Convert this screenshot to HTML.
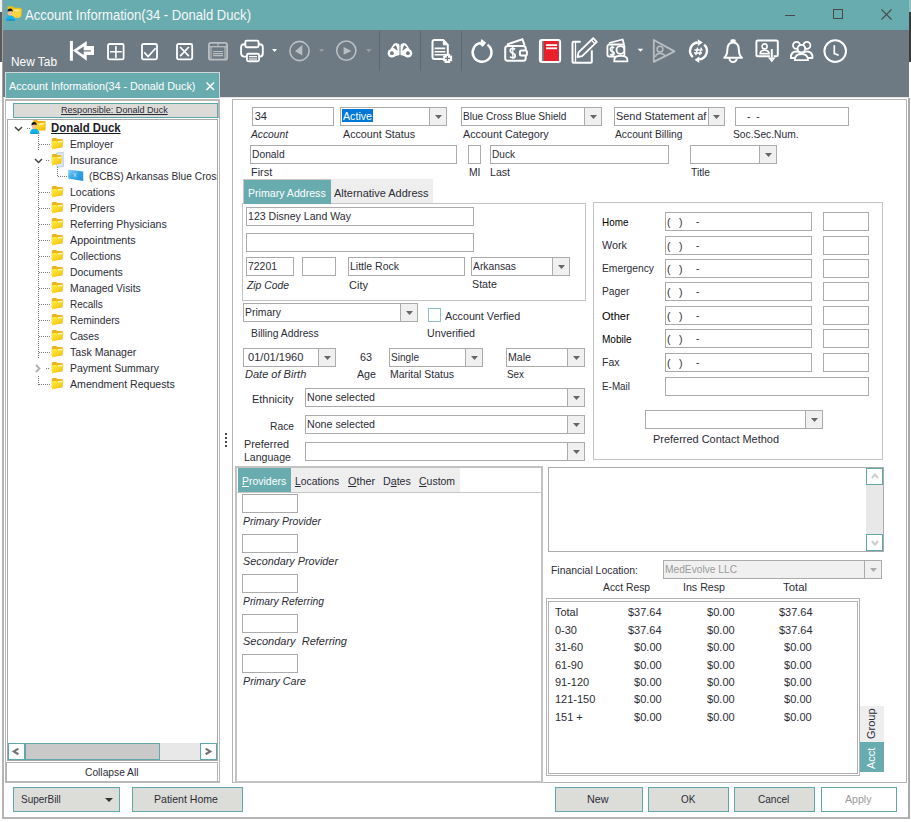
<!DOCTYPE html><html><head><meta charset="utf-8"><style>
html,body{margin:0;padding:0;width:911px;height:822px;overflow:hidden;background:#fff;}
body{position:relative;font-family:"Liberation Sans",sans-serif;}
.a{position:absolute;box-sizing:border-box;}
.t{white-space:nowrap;transform-origin:0 0;}
svg.a{overflow:visible}
</style></head><body>
<div class="a" style="left:0px;top:0px;width:2px;height:12px;background:#f0f0f0"></div>
<div class="a" style="left:0px;top:12px;width:2px;height:50px;background:#5a5a5a"></div>
<div class="a" style="left:2px;top:0px;width:1px;height:98px;background:#a8a2a2"></div>
<div class="a" style="left:909px;top:0px;width:2px;height:12px;background:#8fbfc1"></div>
<div class="a" style="left:909px;top:12px;width:2px;height:50px;background:#3a3a3a"></div>
<div class="a" style="left:3px;top:0px;width:906px;height:30px;background:#68acaf"></div>
<svg class="a" style="left:0.8px;top:0.6px" width="24" height="24" viewBox="0 0 24 24"><path d="M6.2,6.8 Q6.5,5.3 8,5.3 H11.5 L13,6.8 H19.2 Q20.6,6.8 20.6,8.3 V14 Q20.2,16.5 18,16.8 H11 Z" fill="#f1be12"/><path d="M9.5,8.6 H20.6 L19.6,15 Q19.2,16.8 17.4,16.8 H11 Z" fill="#fbd440"/><rect x="13.4" y="8.6" width="4.5" height="1.3" fill="#fff6c8"/><path d="M4.8,19.6 Q4.6,14.8 9.5,14.5 Q14.3,14.8 14.3,19.6 Z" fill="#19b0e8"/><path d="M4.8,19.6 Q5.5,18.2 9.5,18.4 Q13.5,18.2 14.3,19.6Z" fill="#0f7fb6"/><ellipse cx="9.1" cy="11.6" rx="2.5" ry="3" fill="#f3bf98"/><path d="M6.5,10.6 Q6.6,7.8 9.2,7.6 Q11.8,7.8 11.7,10.8 Q10.6,9.2 6.5,10.6Z" fill="#161616"/></svg>
<div class="a t" style="transform:scaleX(0.9339);left:25px;top:8px;font-size:14px;line-height:14px;color:#f7f7f7;">Account Information(34 - Donald Duck)</div>
<div class="a" style="left:785px;top:15px;width:10px;height:1px;background:#4a4a4a"></div>
<div class="a" style="left:833px;top:9px;width:10px;height:10px;border:1px solid #4a4a4a"></div>
<svg class="a" style="left:881px;top:8.5px" width="11" height="11" viewBox="0 0 11 11"><path d="M0.5 0.5 L10.5 10.5 M10.5 0.5 L0.5 10.5" stroke="#4a4a4a" stroke-width="1.1"/></svg>
<div class="a" style="left:3px;top:30px;width:906px;height:67px;background:#6e7a83"></div>
<div class="a" style="left:3px;top:97px;width:906px;height:1px;background:#e4e4e4"></div>
<div class="a t" style="transform:scaleX(0.9896);left:11px;top:56px;font-size:12px;line-height:12px;color:#ffffff;">New Tab</div>
<svg class="a" style="left:66px;top:36px" width="34" height="30" viewBox="0 0 34 30"><rect x="3.9" y="4.9" width="3" height="19.9" fill="#ffffff"/><path fill-rule="evenodd" d="M6.9,14.5 L20.7,4.9 V10.1 H28 V19 H20.7 V24.8 Z M11.2,14.8 L17.7,10.6 V14.2 H24.8 V15.6 H17.7 V19 Z" fill="#ffffff"/></svg>
<svg class="a" style="left:107.2px;top:42.8px" width="19" height="19" viewBox="0 0 19 19"><rect x="1" y="1" width="15.6" height="15.4" rx="1.5" fill="none" stroke="#ffffff" stroke-width="1.8"/><path d="M8.9 2.9 v12 M3 8.8 h11.8" stroke="#ffffff" stroke-width="1.6"/></svg>
<svg class="a" style="left:141.1px;top:42.6px" width="19" height="19" viewBox="0 0 19 19"><rect x="1" y="1" width="15" height="15.3" rx="1.5" fill="none" stroke="#ffffff" stroke-width="1.8"/><path d="M3.2 9.2 L7.1 13.5 L14.6 5.3" fill="none" stroke="#ffffff" stroke-width="1.7"/></svg>
<svg class="a" style="left:175.8px;top:42.6px" width="19" height="19" viewBox="0 0 19 19"><rect x="1" y="1" width="15.2" height="15.3" rx="1.5" fill="none" stroke="#ffffff" stroke-width="1.8"/><path d="M4.1 4 L12.9 13.1 M12.9 4 L4.1 13.1" stroke="#ffffff" stroke-width="1.7"/></svg>
<svg class="a" style="left:208.1px;top:41.8px" width="20" height="20" viewBox="0 0 20 20"><rect x="0.9" y="0.9" width="18.2" height="16.8" rx="2" fill="none" stroke="#b9bec2" stroke-width="1.8"/><path d="M0.9 4.7 h18.2" stroke="#b9bec2" stroke-width="1.3"/><path d="M10 0.9 v3.5 M3 4.5 v13 M17 4.5 v13" stroke="#b9bec2" stroke-width="1.1"/><path d="M5 9.5 h10 M5 11.6 h10 M5 13.6 h10" stroke="#b9bec2" stroke-width="1.1"/></svg>
<svg class="a" style="left:238px;top:37px" width="28" height="28" viewBox="0 0 28 28"><rect x="3.1" y="7.3" width="21.7" height="12.3" rx="3" fill="none" stroke="#ffffff" stroke-width="1.9"/><rect x="7.3" y="3.6" width="13.3" height="6.6" rx="1.5" fill="#6e7a83" stroke="#ffffff" stroke-width="1.9"/><rect x="8.9" y="16.7" width="12.2" height="7.6" rx="1.5" fill="#6e7a83" stroke="#ffffff" stroke-width="1.9"/><path d="M11 19.6 h8 M11 22 h8" stroke="#ffffff" stroke-width="1.2"/></svg>
<svg class="a" style="left:272px;top:49px" width="5.2" height="3.1" viewBox="0 0 5.2 3.1"><path d="M0 0 H5.2 L2.6 3.1Z" fill="#ffffff"/></svg>
<svg class="a" style="left:288px;top:39px" width="24" height="24" viewBox="0 0 24 24"><circle cx="11.5" cy="12" r="9.6" fill="none" stroke="#b9bec2" stroke-width="1.6"/><path d="M7 12.2 L14.3 6 V16.4Z" fill="#b9bec2"/></svg>
<svg class="a" style="left:319px;top:48.7px" width="5.2" height="3.3" viewBox="0 0 5.2 3.3"><path d="M0 0 H5.2 L2.6 3.3Z" fill="#9c9c9c"/></svg>
<svg class="a" style="left:336.4px;top:39px" width="24" height="24" viewBox="0 0 24 24"><circle cx="10.3" cy="11.6" r="9.6" fill="none" stroke="#b9bec2" stroke-width="1.6"/><path d="M7.6 8.1 L15.4 11.9 L7.6 15.7Z" fill="#b9bec2"/></svg>
<svg class="a" style="left:365.8px;top:48.7px" width="5.6" height="3.4" viewBox="0 0 5.6 3.4"><path d="M0 0 H5.6 L2.8 3.4Z" fill="#9c9c9c"/></svg>
<div class="a" style="left:379px;top:31px;width:1px;height:40px;background:#5d6870"></div>
<svg class="a" style="left:385px;top:40px" width="30" height="20" viewBox="0 0 30 20"><path d="M3.2,12.5 L8.8,3.8 L11.5,3 L14.5,4.5 V15 L7,17Z M26.8,12.5 L21.2,3.8 L18.5,3 L15.5,4.5 V15 L23,17Z" fill="#ffffff"/><circle cx="6.9" cy="13.2" r="4.3" fill="#ffffff"/><circle cx="22.9" cy="13.2" r="4.3" fill="#ffffff"/><circle cx="6.9" cy="13.2" r="1.9" fill="#6e7a83"/><circle cx="22.9" cy="13.2" r="1.9" fill="#6e7a83"/><path d="M7.9,7.5 L11,5 L12.8,10.8Z M22.1,7.5 L19,5 L17.2,10.8Z" fill="#6e7a83"/><path d="M15 3 V5.5" stroke="#6e7a83" stroke-width="0.8"/></svg>
<div class="a" style="left:420px;top:31px;width:1px;height:40px;background:#5d6870"></div>
<svg class="a" style="left:428px;top:36px" width="30" height="30" viewBox="0 0 30 30"><path d="M6.5,3.9 H15.3 L19.8,8.8 V21.1 Q19.8,23.1 17.8,23.1 H6.5 Q4.5,23.1 4.5,21.1 V5.9 Q4.5,3.9 6.5,3.9 Z" fill="none" stroke="#ffffff" stroke-width="2"/><path d="M15.3,3.9 L19.8,8.8 H15.3Z" fill="#ffffff" stroke="#ffffff" stroke-width="1"/><path d="M6.6,12.4 H17.2 M6.6,15.7 H17.2 M6.6,18.8 H17.2" stroke="#ffffff" stroke-width="1.6"/><rect x="15.1" y="19.6" width="9" height="5.6" fill="#ffffff"/><rect x="16.6" y="17.9" width="5.6" height="9.1" fill="#ffffff"/><path d="M17,22.4 H21.8 M19.4,20 V24.8" stroke="#6e7a83" stroke-width="1.2"/></svg>
<div class="a" style="left:461px;top:31px;width:1px;height:40px;background:#5d6870"></div>
<svg class="a" style="left:466px;top:36px" width="65" height="30" viewBox="0 0 65 30"><path d="M21.5,8.7 A9.4 9.4 0 1 1 14.5,7.1" fill="none" stroke="#ffffff" stroke-width="2.5"/><path d="M15.5,2.9 L20.2,6.8 L16.5,11.1 L13.8,8.2Z" fill="#ffffff"/><rect x="39.2" y="9.9" width="20.5" height="14.8" rx="2.5" fill="none" stroke="#ffffff" stroke-width="2"/><path d="M41,8.5 L56.4,3.2 L58.6,9.3" fill="none" stroke="#ffffff" stroke-width="2"/><rect x="53.9" y="14.6" width="7" height="4.8" rx="1.5" fill="#6e7a83" stroke="#ffffff" stroke-width="2"/><path d="M49,13.5 Q47,11.8 45.5,12.5 Q43.8,13.5 44.5,15.5 Q45.5,17 47.5,17.5 Q49.8,18.5 49,20.8 Q47.5,22.5 44,21" fill="none" stroke="#ffffff" stroke-width="1.8"/><path d="M46.8,10.8 V23" stroke="#ffffff" stroke-width="1.3"/></svg>
<svg class="a" style="left:535px;top:36px" width="65" height="30" viewBox="0 0 65 30"><rect x="4.9" y="3.9" width="20.2" height="22.2" rx="2" fill="#6e7a83" stroke="#ffffff" stroke-width="2"/><rect x="6.1" y="5" width="1" height="20" fill="#ffffff"/><path d="M8.9,5 H22.1 Q23.6,5 23.6,6.5 V25 H8.9Z" fill="#e8202a"/><rect x="11.1" y="8.2" width="11" height="1.8" fill="#ffffff"/><rect x="11.1" y="11.4" width="11" height="1.8" fill="#ffffff"/><path d="M45.7,5.8 H38.5 Q37.5,5.8 37.5,6.8 V25.8 Q37.5,26.8 38.5,26.8 H55.8 Q56.8,26.8 56.8,25.8 V14.3" fill="none" stroke="#ffffff" stroke-width="2"/><path d="M40.5,6 V26" stroke="#ffffff" stroke-width="1.3"/><path d="M42.5,21 L43.56,16.35 L58.19,2.14 L61.81,5.86 L47.18,20.07Z" fill="#6e7a83" stroke="#ffffff" stroke-width="1.8" stroke-linejoin="round"/><path d="M56.3,4 L59.9,7.7" stroke="#ffffff" stroke-width="1.3"/></svg>
<svg class="a" style="left:602px;top:36px" width="80" height="30" viewBox="0 0 80 30"><rect x="5.4" y="8.5" width="17" height="12.1" rx="2" fill="none" stroke="#ffffff" stroke-width="1.8"/><path d="M7,7 L20.6,3.5 L22,8.3" fill="none" stroke="#ffffff" stroke-width="1.8"/><path d="M12.1,12 Q10.5,10.6 9.2,11.4 Q7.9,12.3 8.5,14 Q9.2,15.2 10.6,15.6 Q12.6,16.4 11.9,18.4 Q10.8,19.8 8,18.6" fill="none" stroke="#ffffff" stroke-width="1.6"/><path d="M10.2,9.6 V20.8" stroke="#ffffff" stroke-width="1.1"/><circle cx="18.4" cy="14" r="3.9" fill="#6e7a83" stroke="#ffffff" stroke-width="1.8"/><path d="M12.3,25.4 V23.8 Q12.3,19.8 18.6,19.8 Q25.4,19.8 25.4,23.8 V25.4 Z" fill="#6e7a83" stroke="#ffffff" stroke-width="1.8" stroke-linejoin="round"/><path d="M35.6,12.7 H41.3 L38.45,15.8Z" fill="#ffffff"/><path d="M51.8,4 L72.5,15.4 L51.8,25.9 Z" fill="none" stroke="#b9bec2" stroke-width="1.8" stroke-linejoin="round"/><circle cx="58" cy="13.2" r="2.9" fill="none" stroke="#b9bec2" stroke-width="1.5"/><path d="M53.6,21.1 Q53.6,17.6 58.2,17.6 Q62.8,17.6 62.8,21.1" fill="none" stroke="#b9bec2" stroke-width="1.5"/></svg>
<svg class="a" style="left:684px;top:36px" width="66" height="30" viewBox="0 0 66 30"><path d="M8.88,21.14 A8.4 8.4 0 0 1 13.77,6.53" fill="none" stroke="#ffffff" stroke-width="2.4"/><path d="M13.8,3.3 L18.8,6.6 L13.8,10.1Z" fill="#ffffff"/><path d="M20.12,8.66 A8.4 8.4 0 0 1 15.23,23.27" fill="none" stroke="#ffffff" stroke-width="2.4"/><path d="M15.3,20.4 L10.6,23.7 L15.3,27Z" fill="#ffffff"/><path d="M11.8,19.2 L13.6,11.6 M15.6,19.2 L17.4,11.6 M10.5,13.9 H18.5 M10,16.9 H18" stroke="#ffffff" stroke-width="1.5"/><path d="M40.2,21.8 Q43.2,19.5 43.3,14 Q43.3,6.4 49.1,6.4 Q54.9,6.4 54.9,14 Q55,19.5 58,21.8 Z" fill="none" stroke="#ffffff" stroke-width="2" stroke-linejoin="round"/><rect x="46.4" y="3.3" width="5.4" height="3.2" rx="1.5" fill="#ffffff"/><path d="M45.5,22.5 A3.6 3.6 0 0 0 52.7,22.5" fill="none" stroke="#ffffff" stroke-width="2"/></svg>
<svg class="a" style="left:752px;top:36px" width="100" height="30" viewBox="0 0 100 30"><path d="M18,20.3 H5.9 Q4.4,20.3 4.4,18.8 V5.9 Q4.4,4.4 5.9,4.4 H24.3 Q25.8,4.4 25.8,5.9 V18.8 Q25.8,20.3 24.3,20.3 H21.6" fill="none" stroke="#ffffff" stroke-width="2"/><circle cx="12.6" cy="10.4" r="2.5" fill="none" stroke="#ffffff" stroke-width="1.6"/><path d="M8.2,17.6 Q8.2,14.3 12.6,14.3 Q17,14.3 17,17.6 Z" fill="none" stroke="#ffffff" stroke-width="1.6"/><path d="M19.8,13 V23" stroke="#ffffff" stroke-width="2"/><path d="M15.9,21.4 H23.6 L19.8,26.3Z" fill="#ffffff"/><path d="M38.8,22 Q38.8,15.5 44.5,15.5 Q50,15.5 50,22Z M60.6,22 Q60.6,15.5 54.9,15.5 Q49.4,15.5 49.4,22Z" fill="#6e7a83" stroke="#ffffff" stroke-width="1.8" stroke-linejoin="round"/><circle cx="44.5" cy="9.3" r="3.5" fill="#6e7a83" stroke="#ffffff" stroke-width="1.8"/><circle cx="54.9" cy="9.3" r="3.5" fill="#6e7a83" stroke="#ffffff" stroke-width="1.8"/><path d="M42.8,24.2 Q42.8,18 49.4,18 Q56,18 56,24.2Z" fill="#6e7a83" stroke="#ffffff" stroke-width="1.8" stroke-linejoin="round"/><circle cx="49.4" cy="12.6" r="3.8" fill="#6e7a83" stroke="#ffffff" stroke-width="1.8"/><circle cx="83.2" cy="15.1" r="10.8" fill="none" stroke="#ffffff" stroke-width="2"/><path d="M82.3,9.3 V17.6 L86.7,19.2" fill="none" stroke="#ffffff" stroke-width="1.7"/></svg>
<div class="a" style="left:5px;top:72px;width:215px;height:26px;background:#68acaf;border:1px solid #cfd6d8;border-bottom:none"></div>
<div class="a t" style="transform:scaleX(0.9802);left:8.8px;top:81px;font-size:11px;line-height:11px;color:#ffffff;">Account Information(34 - Donald Duck)</div>
<svg class="a" style="left:205.5px;top:81.5px" width="9" height="9" viewBox="0 0 9 9"><path d="M0.5 0.5 L8 8 M8 0.5 L0.5 8" stroke="#fff" stroke-width="1.6"/></svg>
<div class="a" style="left:2px;top:98px;width:2px;height:721px;background:#b4b4b4"></div>
<div class="a" style="left:2px;top:817px;width:907px;height:2px;background:#b4b4b4"></div>
<div class="a" style="left:908px;top:98px;width:2px;height:721px;background:#ababab"></div>
<div class="a" style="left:5px;top:99px;width:215px;height:684px;border:2px solid #b8b8b8;border-left:1px solid #b8b8b8;border-right:1px solid #b8b8b8"></div>
<div class="a" style="left:218px;top:99px;width:1px;height:19px;background:#b8b8b8"></div>
<div class="a" style="left:13px;top:103px;width:205px;height:15px;background:#dddbd8;border:1px solid #5ea7aa"></div>
<div class="a t" style="transform:scaleX(1.0060);left:61.2px;top:106px;font-size:9px;line-height:9px;color:#2c2c36;text-decoration:underline;">Responsible: Donald Duck</div>
<div class="a" style="left:7px;top:119px;width:211px;height:642px;border:1px solid #a8a8a8;background:#fff;"></div>
<svg width="0" height="0" style="position:absolute"><defs><linearGradient id="fg" x1="0" y1="0" x2="1" y2="1"><stop offset="0" stop-color="#fff04a"/><stop offset="0.55" stop-color="#fbd320"/><stop offset="1" stop-color="#f2ae08"/></linearGradient><linearGradient id="cg" x1="0" y1="0" x2="1" y2="1"><stop offset="0" stop-color="#9ad8f6"/><stop offset="0.45" stop-color="#39a8e6"/><stop offset="1" stop-color="#1b8fdc"/></linearGradient></defs></svg>
<svg class="a" style="left:14px;top:125.5px" width="9" height="6" viewBox="0 0 9 6"><path d="M1 1 l3.5 3.5 l3.5 -3.5" fill="none" stroke="#444" stroke-width="1.5"/></svg>
<div class="a" style="left:27px;top:128px;width:4px;height:1px;background-image:linear-gradient(90deg,#7a7a7a 50%,transparent 50%);background-size:2px 1px"></div>
<svg class="a" style="left:26px;top:118px" width="24" height="18" viewBox="0 0 24 18"><path d="M7,3 Q7,2 8,2 H11 L12,3 H19.5 V12.5 H7Z" fill="#edb51c"/><path d="M7,5.5 L19.8,4.5 L18.2,12 L8,12.6Z" fill="url(#fg)"/><path d="M13.5,5.5 L18.2,5.2 L17.8,6.6 L13.3,6.9Z" fill="#fff6d0"/><path d="M4,15.8 Q3.8,10.8 8.4,10.5 Q13.2,10.8 13.4,15.8Z" fill="#17b2ea"/><path d="M4,15.8 Q5,14.5 8.4,14.7 Q12.4,14.5 13.4,15.8Z" fill="#0c86c0"/><ellipse cx="8" cy="8" rx="2.4" ry="2.9" fill="#f3bf98"/><path d="M5.4,7.2 Q5.5,4.2 8.1,4.1 Q10.9,4.3 10.7,7.3 Q9.5,5.8 5.4,7.2Z" fill="#151515"/></svg>
<div class="a t" style="transform:scaleX(0.9490);left:51.4px;top:122px;font-size:12px;line-height:12px;color:#1c1c28;font-weight:bold;text-decoration:underline;">Donald Duck</div>
<div class="a" style="left:38px;top:135px;width:1px;height:16px;background-image:linear-gradient(180deg,#7a7a7a 50%,transparent 50%);background-size:1px 2px"></div>
<div class="a" style="left:38px;top:167px;width:1px;height:192px;background-image:linear-gradient(180deg,#7a7a7a 50%,transparent 50%);background-size:1px 2px"></div>
<div class="a" style="left:38px;top:376px;width:1px;height:9px;background-image:linear-gradient(180deg,#7a7a7a 50%,transparent 50%);background-size:1px 2px"></div>
<div class="a" style="left:39px;top:144px;width:11px;height:1px;background-image:linear-gradient(90deg,#7a7a7a 50%,transparent 50%);background-size:2px 1px"></div>
<svg class="a" style="left:48px;top:134px" width="18" height="18" viewBox="0 0 18 18"><path d="M3.8,5.2 Q3.8,4 5,4 H8.2 L9.2,5 H14.6 V13.5 H3.8Z" fill="#edb51c"/><path d="M3.6,7.3 L15.8,6.4 L13.7,13.3 L4,15.6Z" fill="url(#fg)"/><path d="M10.3,7.2 L14.6,6.9 L14.2,8.2 L10,8.5Z" fill="#fff6d0"/></svg>
<div class="a t" style="transform:scaleX(0.9340);left:69.6px;top:139px;font-size:11px;line-height:11px;color:#2c2c36;">Employer</div>
<svg class="a" style="left:33.5px;top:157.5px" width="9" height="6" viewBox="0 0 9 6"><path d="M1 1 l3.5 3.5 l3.5 -3.5" fill="none" stroke="#444" stroke-width="1.5"/></svg>
<div class="a" style="left:46px;top:160px;width:4px;height:1px;background-image:linear-gradient(90deg,#7a7a7a 50%,transparent 50%);background-size:2px 1px"></div>
<svg class="a" style="left:48px;top:150px" width="18" height="18" viewBox="0 0 18 18"><path d="M8.6,3 L15.2,2.4 L15.4,16.6 L9,17Z" fill="#dce8f3" stroke="#a9bdd0" stroke-width="0.7"/><path d="M3.8,5.2 Q3.8,4 5,4 H8.2 L9.2,5 H13.2 V13.5 H3.8Z" fill="#edb51c"/><path d="M3.6,7.3 L14,6.5 L13,13.3 L4,15.6Z" fill="url(#fg)"/><path d="M9.6,7.2 L13.4,6.9 L13.1,8.2 L9.4,8.5Z" fill="#fff6d0"/></svg>
<div class="a t" style="transform:scaleX(0.9832);left:69.6px;top:155px;font-size:11px;line-height:11px;color:#2c2c36;">Insurance</div>
<div class="a" style="left:57px;top:167px;width:1px;height:9px;background-image:linear-gradient(180deg,#7a7a7a 50%,transparent 50%);background-size:1px 2px"></div>
<div class="a" style="left:58px;top:176px;width:10px;height:1px;background-image:linear-gradient(90deg,#7a7a7a 50%,transparent 50%);background-size:2px 1px"></div>
<svg class="a" style="left:64px;top:166px" width="24" height="18" viewBox="0 0 24 18"><path d="M4.2,3.4 L19.2,5.5 L19.2,15 L4.2,12.6Z" fill="url(#cg)"/><path d="M9,7.5 L13,10.5 M13,7.2 L9,10.8 M11,6.5 V11.5" stroke="#c8ecfb" stroke-width="0.7" opacity="0.8"/></svg>
<div class="a" style="left:89px;top:170px;width:128px;height:14px;overflow:hidden"><div style="position:absolute;left:0;top:1px;font-size:11px;line-height:11px;white-space:nowrap;color:#2c2c36;transform:scaleX(0.93);transform-origin:0 0">(BCBS) Arkansas Blue Cross</div></div>
<div class="a" style="left:39px;top:192px;width:11px;height:1px;background-image:linear-gradient(90deg,#7a7a7a 50%,transparent 50%);background-size:2px 1px"></div>
<svg class="a" style="left:48px;top:182px" width="18" height="18" viewBox="0 0 18 18"><path d="M3.8,5.2 Q3.8,4 5,4 H8.2 L9.2,5 H14.6 V13.5 H3.8Z" fill="#edb51c"/><path d="M3.6,7.3 L15.8,6.4 L13.7,13.3 L4,15.6Z" fill="url(#fg)"/><path d="M10.3,7.2 L14.6,6.9 L14.2,8.2 L10,8.5Z" fill="#fff6d0"/></svg>
<div class="a t" style="transform:scaleX(0.9555);left:69.6px;top:187px;font-size:11px;line-height:11px;color:#2c2c36;">Locations</div>
<div class="a" style="left:39px;top:208px;width:11px;height:1px;background-image:linear-gradient(90deg,#7a7a7a 50%,transparent 50%);background-size:2px 1px"></div>
<svg class="a" style="left:48px;top:198px" width="18" height="18" viewBox="0 0 18 18"><path d="M3.8,5.2 Q3.8,4 5,4 H8.2 L9.2,5 H14.6 V13.5 H3.8Z" fill="#edb51c"/><path d="M3.6,7.3 L15.8,6.4 L13.7,13.3 L4,15.6Z" fill="url(#fg)"/><path d="M10.3,7.2 L14.6,6.9 L14.2,8.2 L10,8.5Z" fill="#fff6d0"/></svg>
<div class="a t" style="transform:scaleX(0.9619);left:69.6px;top:203px;font-size:11px;line-height:11px;color:#2c2c36;">Providers</div>
<div class="a" style="left:39px;top:224px;width:11px;height:1px;background-image:linear-gradient(90deg,#7a7a7a 50%,transparent 50%);background-size:2px 1px"></div>
<svg class="a" style="left:48px;top:214px" width="18" height="18" viewBox="0 0 18 18"><path d="M3.8,5.2 Q3.8,4 5,4 H8.2 L9.2,5 H14.6 V13.5 H3.8Z" fill="#edb51c"/><path d="M3.6,7.3 L15.8,6.4 L13.7,13.3 L4,15.6Z" fill="url(#fg)"/><path d="M10.3,7.2 L14.6,6.9 L14.2,8.2 L10,8.5Z" fill="#fff6d0"/></svg>
<div class="a t" style="transform:scaleX(0.9586);left:69.6px;top:219px;font-size:11px;line-height:11px;color:#2c2c36;">Referring Physicians</div>
<div class="a" style="left:39px;top:240px;width:11px;height:1px;background-image:linear-gradient(90deg,#7a7a7a 50%,transparent 50%);background-size:2px 1px"></div>
<svg class="a" style="left:48px;top:230px" width="18" height="18" viewBox="0 0 18 18"><path d="M3.8,5.2 Q3.8,4 5,4 H8.2 L9.2,5 H14.6 V13.5 H3.8Z" fill="#edb51c"/><path d="M3.6,7.3 L15.8,6.4 L13.7,13.3 L4,15.6Z" fill="url(#fg)"/><path d="M10.3,7.2 L14.6,6.9 L14.2,8.2 L10,8.5Z" fill="#fff6d0"/></svg>
<div class="a t" style="transform:scaleX(0.9767);left:69.6px;top:235px;font-size:11px;line-height:11px;color:#2c2c36;">Appointments</div>
<div class="a" style="left:39px;top:256px;width:11px;height:1px;background-image:linear-gradient(90deg,#7a7a7a 50%,transparent 50%);background-size:2px 1px"></div>
<svg class="a" style="left:48px;top:246px" width="18" height="18" viewBox="0 0 18 18"><path d="M3.8,5.2 Q3.8,4 5,4 H8.2 L9.2,5 H14.6 V13.5 H3.8Z" fill="#edb51c"/><path d="M3.6,7.3 L15.8,6.4 L13.7,13.3 L4,15.6Z" fill="url(#fg)"/><path d="M10.3,7.2 L14.6,6.9 L14.2,8.2 L10,8.5Z" fill="#fff6d0"/></svg>
<div class="a t" style="transform:scaleX(0.9477);left:69.6px;top:251px;font-size:11px;line-height:11px;color:#2c2c36;">Collections</div>
<div class="a" style="left:39px;top:272px;width:11px;height:1px;background-image:linear-gradient(90deg,#7a7a7a 50%,transparent 50%);background-size:2px 1px"></div>
<svg class="a" style="left:48px;top:262px" width="18" height="18" viewBox="0 0 18 18"><path d="M3.8,5.2 Q3.8,4 5,4 H8.2 L9.2,5 H14.6 V13.5 H3.8Z" fill="#edb51c"/><path d="M3.6,7.3 L15.8,6.4 L13.7,13.3 L4,15.6Z" fill="url(#fg)"/><path d="M10.3,7.2 L14.6,6.9 L14.2,8.2 L10,8.5Z" fill="#fff6d0"/></svg>
<div class="a t" style="transform:scaleX(0.9489);left:69.6px;top:267px;font-size:11px;line-height:11px;color:#2c2c36;">Documents</div>
<div class="a" style="left:39px;top:288px;width:11px;height:1px;background-image:linear-gradient(90deg,#7a7a7a 50%,transparent 50%);background-size:2px 1px"></div>
<svg class="a" style="left:48px;top:278px" width="18" height="18" viewBox="0 0 18 18"><path d="M3.8,5.2 Q3.8,4 5,4 H8.2 L9.2,5 H14.6 V13.5 H3.8Z" fill="#edb51c"/><path d="M3.6,7.3 L15.8,6.4 L13.7,13.3 L4,15.6Z" fill="url(#fg)"/><path d="M10.3,7.2 L14.6,6.9 L14.2,8.2 L10,8.5Z" fill="#fff6d0"/></svg>
<div class="a t" style="transform:scaleX(0.9425);left:69.6px;top:283px;font-size:11px;line-height:11px;color:#2c2c36;">Managed Visits</div>
<div class="a" style="left:39px;top:304px;width:11px;height:1px;background-image:linear-gradient(90deg,#7a7a7a 50%,transparent 50%);background-size:2px 1px"></div>
<svg class="a" style="left:48px;top:294px" width="18" height="18" viewBox="0 0 18 18"><path d="M3.8,5.2 Q3.8,4 5,4 H8.2 L9.2,5 H14.6 V13.5 H3.8Z" fill="#edb51c"/><path d="M3.6,7.3 L15.8,6.4 L13.7,13.3 L4,15.6Z" fill="url(#fg)"/><path d="M10.3,7.2 L14.6,6.9 L14.2,8.2 L10,8.5Z" fill="#fff6d0"/></svg>
<div class="a t" style="transform:scaleX(0.9091);left:69.6px;top:299px;font-size:11px;line-height:11px;color:#2c2c36;">Recalls</div>
<div class="a" style="left:39px;top:320px;width:11px;height:1px;background-image:linear-gradient(90deg,#7a7a7a 50%,transparent 50%);background-size:2px 1px"></div>
<svg class="a" style="left:48px;top:310px" width="18" height="18" viewBox="0 0 18 18"><path d="M3.8,5.2 Q3.8,4 5,4 H8.2 L9.2,5 H14.6 V13.5 H3.8Z" fill="#edb51c"/><path d="M3.6,7.3 L15.8,6.4 L13.7,13.3 L4,15.6Z" fill="url(#fg)"/><path d="M10.3,7.2 L14.6,6.9 L14.2,8.2 L10,8.5Z" fill="#fff6d0"/></svg>
<div class="a t" style="transform:scaleX(0.9344);left:69.6px;top:315px;font-size:11px;line-height:11px;color:#2c2c36;">Reminders</div>
<div class="a" style="left:39px;top:336px;width:11px;height:1px;background-image:linear-gradient(90deg,#7a7a7a 50%,transparent 50%);background-size:2px 1px"></div>
<svg class="a" style="left:48px;top:326px" width="18" height="18" viewBox="0 0 18 18"><path d="M3.8,5.2 Q3.8,4 5,4 H8.2 L9.2,5 H14.6 V13.5 H3.8Z" fill="#edb51c"/><path d="M3.6,7.3 L15.8,6.4 L13.7,13.3 L4,15.6Z" fill="url(#fg)"/><path d="M10.3,7.2 L14.6,6.9 L14.2,8.2 L10,8.5Z" fill="#fff6d0"/></svg>
<div class="a t" style="transform:scaleX(0.9299);left:69.6px;top:331px;font-size:11px;line-height:11px;color:#2c2c36;">Cases</div>
<div class="a" style="left:39px;top:352px;width:11px;height:1px;background-image:linear-gradient(90deg,#7a7a7a 50%,transparent 50%);background-size:2px 1px"></div>
<svg class="a" style="left:48px;top:342px" width="18" height="18" viewBox="0 0 18 18"><path d="M3.8,5.2 Q3.8,4 5,4 H8.2 L9.2,5 H14.6 V13.5 H3.8Z" fill="#edb51c"/><path d="M3.6,7.3 L15.8,6.4 L13.7,13.3 L4,15.6Z" fill="url(#fg)"/><path d="M10.3,7.2 L14.6,6.9 L14.2,8.2 L10,8.5Z" fill="#fff6d0"/></svg>
<div class="a t" style="transform:scaleX(0.9610);left:69.6px;top:347px;font-size:11px;line-height:11px;color:#2c2c36;">Task Manager</div>
<svg class="a" style="left:35px;top:364px" width="6" height="9" viewBox="0 0 6 9"><path d="M1 1 l3.5 3.5 l-3.5 3.5" fill="none" stroke="#b0b0b0" stroke-width="1.8"/></svg>
<div class="a" style="left:46px;top:368px;width:4px;height:1px;background-image:linear-gradient(90deg,#7a7a7a 50%,transparent 50%);background-size:2px 1px"></div>
<svg class="a" style="left:48px;top:358px" width="18" height="18" viewBox="0 0 18 18"><path d="M3.8,5.2 Q3.8,4 5,4 H8.2 L9.2,5 H14.6 V13.5 H3.8Z" fill="#edb51c"/><path d="M3.6,7.3 L15.8,6.4 L13.7,13.3 L4,15.6Z" fill="url(#fg)"/><path d="M10.3,7.2 L14.6,6.9 L14.2,8.2 L10,8.5Z" fill="#fff6d0"/></svg>
<div class="a t" style="transform:scaleX(0.9505);left:69.6px;top:363px;font-size:11px;line-height:11px;color:#2c2c36;">Payment Summary</div>
<div class="a" style="left:39px;top:384px;width:11px;height:1px;background-image:linear-gradient(90deg,#7a7a7a 50%,transparent 50%);background-size:2px 1px"></div>
<svg class="a" style="left:48px;top:374px" width="18" height="18" viewBox="0 0 18 18"><path d="M3.8,5.2 Q3.8,4 5,4 H8.2 L9.2,5 H14.6 V13.5 H3.8Z" fill="#edb51c"/><path d="M3.6,7.3 L15.8,6.4 L13.7,13.3 L4,15.6Z" fill="url(#fg)"/><path d="M10.3,7.2 L14.6,6.9 L14.2,8.2 L10,8.5Z" fill="#fff6d0"/></svg>
<div class="a t" style="transform:scaleX(0.9628);left:69.6px;top:379px;font-size:11px;line-height:11px;color:#2c2c36;">Amendment Requests</div>
<div class="a" style="left:8px;top:743px;width:209px;height:17px;background:#e8e8e8"></div>
<div class="a" style="left:8px;top:743px;width:17px;height:17px;background:#fff;border:1px solid #5ea7aa"></div>
<svg class="a" style="left:0px;top:744px" width="24" height="14" viewBox="0 0 24 14"><path d="M18.4,4.6 L13.8,7.4 L18.4,10.2" fill="none" stroke="#757575" stroke-width="2.2" stroke-linejoin="miter"/></svg>
<div class="a" style="left:25px;top:743px;width:135px;height:17px;background:#c9c9c9;border:1px solid #5ea7aa"></div>
<div class="a" style="left:200px;top:743px;width:17px;height:17px;background:#fff;border:1px solid #5ea7aa"></div>
<svg class="a" style="left:0px;top:744px" width="220" height="14" viewBox="0 0 220 14"><path d="M205.6,4.6 L210.2,7.4 L205.6,10.2" fill="none" stroke="#757575" stroke-width="2.2"/></svg>
<div class="a" style="left:6px;top:762px;width:212px;height:19px;border:1px solid #b4b4b4;border-bottom:none;background:#fff"></div>
<div class="a t" style="transform:scaleX(0.9307);left:84.5px;top:767px;font-size:11px;line-height:11px;color:#2c2c36;">Collapse All</div>
<div class="a" style="left:13px;top:787px;width:107px;height:25px;background:#dcdcd9;border:1px solid #5ea7aa"></div>
<div class="a t" style="transform:scaleX(0.9039);left:20.6px;top:794px;font-size:11px;line-height:11px;color:#2c2c36;">SuperBill</div>
<div class="a" style="left:105px;top:798px;width:0;height:0;border-left:4px solid transparent;border-right:4px solid transparent;border-top:4px solid #333"></div>
<div class="a" style="left:132px;top:787px;width:111px;height:25px;background:#dcdcd9;border:1px solid #5ea7aa"></div>
<div class="a t" style="transform:scaleX(0.9602);left:154.2px;top:794px;font-size:11px;line-height:11px;color:#2c2c36;">Patient Home</div>
<div class="a" style="left:555px;top:787px;width:88px;height:25px;background:#dcdcd9;border:1px solid #5ea7aa"></div>
<div class="a t" style="transform:scaleX(0.9811);left:586.6px;top:794px;font-size:11px;line-height:11px;color:#2c2c36;">New</div>
<div class="a" style="left:648px;top:787px;width:81px;height:25px;background:#dcdcd9;border:1px solid #5ea7aa"></div>
<div class="a t" style="transform:scaleX(0.8990);left:680.5px;top:794px;font-size:11px;line-height:11px;color:#2c2c36;">OK</div>
<div class="a" style="left:734px;top:787px;width:81px;height:25px;background:#dcdcd9;border:1px solid #5ea7aa"></div>
<div class="a t" style="transform:scaleX(0.9139);left:758px;top:794px;font-size:11px;line-height:11px;color:#2c2c36;">Cancel</div>
<div class="a" style="left:821px;top:787px;width:76px;height:25px;background:#ffffff;border:1px solid #5ea7aa"></div>
<div class="a t" style="transform:scaleX(0.9625);left:844.7px;top:794px;font-size:11px;line-height:11px;color:#9a9a9a;">Apply</div>
<div class="a" style="left:232px;top:99px;width:675px;height:684px;border:1px solid #b4b4b4"></div>
<div class="a" style="left:252px;top:107px;width:82px;height:19px;border:1px solid #ababab;background:#fff;"></div>
<div class="a t" style="left:254.7px;top:111px;font-size:11px;line-height:11px;color:#2c2c36;">34</div>
<div class="a t" style="transform:scaleX(0.9308);left:251.4px;top:129px;font-size:11px;line-height:11px;color:#2c2c36;font-style:italic;">Account</div>
<div class="a" style="left:340px;top:107px;width:107px;height:19px;border:1px solid #ababab;background:#fff;"></div>
<div class="a" style="left:429px;top:108px;width:17px;height:17px;background:#f0f0f0;border-left:1px solid #ababab;box-sizing:border-box"></div>
<svg class="a" style="left:434.5px;top:115px" width="7" height="4"><path d="M0 0 H7 L3.5 4Z" fill="#666"/></svg>
<div class="a" style="left:341.5px;top:109px;width:31px;height:13px;background:#0078d7"></div>
<div class="a t" style="transform:scaleX(0.9677);left:342.6px;top:111px;font-size:11px;line-height:11px;color:#ffffff;">Active</div>
<div class="a t" style="transform:scaleX(0.9730);left:343px;top:129px;font-size:11px;line-height:11px;color:#2c2c36;">Account Status</div>
<div class="a" style="left:461px;top:107px;width:141px;height:19px;border:1px solid #ababab;background:#fff;"></div>
<div class="a" style="left:584px;top:108px;width:17px;height:17px;background:#f0f0f0;border-left:1px solid #ababab;box-sizing:border-box"></div>
<svg class="a" style="left:589.5px;top:115px" width="7" height="4"><path d="M0 0 H7 L3.5 4Z" fill="#666"/></svg>
<div class="a t" style="transform:scaleX(0.9199);left:462.6px;top:111px;font-size:11px;line-height:11px;color:#2c2c36;">Blue Cross Blue Shield</div>
<div class="a t" style="transform:scaleX(0.9790);left:463.3px;top:129px;font-size:11px;line-height:11px;color:#2c2c36;">Account Category</div>
<div class="a" style="left:614px;top:107px;width:111px;height:19px;border:1px solid #ababab;background:#fff;"></div>
<div class="a" style="left:708px;top:108px;width:16px;height:17px;background:#f0f0f0;border-left:1px solid #ababab;box-sizing:border-box"></div>
<svg class="a" style="left:713.0px;top:115px" width="7" height="4"><path d="M0 0 H7 L3.5 4Z" fill="#666"/></svg>
<div class="a t" style="transform:scaleX(0.9909);left:615.7px;top:111px;font-size:11px;line-height:11px;color:#2c2c36;">Send Statement af</div>
<div class="a t" style="transform:scaleX(0.9341);left:614.8px;top:129px;font-size:11px;line-height:11px;color:#2c2c36;">Account Billing</div>
<div class="a" style="left:735px;top:107px;width:114px;height:19px;border:1px solid #ababab;background:#fff;"></div>
<div class="a t" style="transform:scaleX(0.9515);left:747px;top:111px;font-size:11px;line-height:11px;color:#2c2c36;">-&nbsp;&nbsp;-</div>
<div class="a t" style="transform:scaleX(0.9330);left:732.7px;top:129px;font-size:11px;line-height:11px;color:#2c2c36;">Soc.Sec.Num.</div>
<div class="a" style="left:250px;top:145px;width:207px;height:19px;border:1px solid #ababab;background:#fff;"></div>
<div class="a t" style="transform:scaleX(0.9352);left:251.5px;top:149px;font-size:11px;line-height:11px;color:#2c2c36;">Donald</div>
<div class="a t" style="transform:scaleX(0.9911);left:250.6px;top:167px;font-size:11px;line-height:11px;color:#2c2c36;">First</div>
<div class="a" style="left:468px;top:145px;width:13px;height:19px;border:1px solid #ababab;background:#fff;"></div>
<div class="a t" style="transform:scaleX(0.9400);left:468.9px;top:167px;font-size:11px;line-height:11px;color:#2c2c36;">MI</div>
<div class="a" style="left:490px;top:145px;width:179px;height:19px;border:1px solid #ababab;background:#fff;"></div>
<div class="a t" style="transform:scaleX(0.9177);left:491.6px;top:149px;font-size:11px;line-height:11px;color:#2c2c36;">Duck</div>
<div class="a t" style="transform:scaleX(0.9617);left:490.4px;top:167px;font-size:11px;line-height:11px;color:#2c2c36;">Last</div>
<div class="a" style="left:690px;top:145px;width:87px;height:19px;border:1px solid #ababab;background:#fff;"></div>
<div class="a" style="left:759px;top:146px;width:17px;height:17px;background:#f0f0f0;border-left:1px solid #ababab;box-sizing:border-box"></div>
<svg class="a" style="left:764.5px;top:153px" width="7" height="4"><path d="M0 0 H7 L3.5 4Z" fill="#666"/></svg>
<div class="a t" style="transform:scaleX(0.9325);left:691.3px;top:167px;font-size:11px;line-height:11px;color:#2c2c36;">Title</div>
<div class="a" style="left:242px;top:203px;width:344px;height:98px;border:1px solid #c4c4c4"></div>
<div class="a" style="left:243px;top:179px;width:190px;height:24px;background:#eeeeee"></div>
<div class="a" style="left:243px;top:179px;width:88px;height:25px;background:#68acaf;border-top:1px solid #cbc5c5;border-left:1px solid #cbc5c5"></div>
<div class="a t" style="transform:scaleX(0.9628);left:247.7px;top:188px;font-size:11px;line-height:11px;color:#ffffff;">Primary Address</div>
<div class="a t" style="transform:scaleX(0.9970);left:333.7px;top:188px;font-size:11px;line-height:11px;color:#2c2c36;">Alternative Address</div>
<div class="a" style="left:246px;top:207px;width:228px;height:19px;border:1px solid #ababab;background:#fff;"></div>
<div class="a t" style="transform:scaleX(0.9607);left:248.4px;top:211px;font-size:11px;line-height:11px;color:#2c2c36;">123 Disney Land Way</div>
<div class="a" style="left:246px;top:233px;width:228px;height:19px;border:1px solid #ababab;background:#fff;"></div>
<div class="a" style="left:246px;top:257px;width:48px;height:19px;border:1px solid #ababab;background:#fff;"></div>
<div class="a t" style="transform:scaleX(0.9479);left:248px;top:261px;font-size:11px;line-height:11px;color:#2c2c36;">72201</div>
<div class="a" style="left:302px;top:257px;width:34px;height:19px;border:1px solid #ababab;background:#fff;"></div>
<div class="a" style="left:348px;top:257px;width:117px;height:19px;border:1px solid #ababab;background:#fff;"></div>
<div class="a t" style="transform:scaleX(0.9541);left:349.5px;top:261px;font-size:11px;line-height:11px;color:#2c2c36;">Little Rock</div>
<div class="a" style="left:471px;top:257px;width:99px;height:19px;border:1px solid #ababab;background:#fff;"></div>
<div class="a" style="left:552px;top:258px;width:17px;height:17px;background:#f0f0f0;border-left:1px solid #ababab;box-sizing:border-box"></div>
<svg class="a" style="left:557.5px;top:265px" width="7" height="4"><path d="M0 0 H7 L3.5 4Z" fill="#666"/></svg>
<div class="a t" style="transform:scaleX(0.9376);left:473.1px;top:261px;font-size:11px;line-height:11px;color:#2c2c36;">Arkansas</div>
<div class="a t" style="transform:scaleX(0.9408);left:247px;top:280px;font-size:11px;line-height:11px;color:#2c2c36;font-style:italic;">Zip Code</div>
<div class="a t" style="transform:scaleX(1.0025);left:348.6px;top:280px;font-size:11px;line-height:11px;color:#2c2c36;">City</div>
<div class="a t" style="transform:scaleX(0.9732);left:471.8px;top:279px;font-size:11px;line-height:11px;color:#2c2c36;">State</div>
<div class="a" style="left:243px;top:303px;width:175px;height:19px;border:1px solid #ababab;background:#fff;"></div>
<div class="a" style="left:400px;top:304px;width:17px;height:17px;background:#f0f0f0;border-left:1px solid #ababab;box-sizing:border-box"></div>
<svg class="a" style="left:405.5px;top:311px" width="7" height="4"><path d="M0 0 H7 L3.5 4Z" fill="#666"/></svg>
<div class="a t" style="transform:scaleX(0.9501);left:244.7px;top:307px;font-size:11px;line-height:11px;color:#2c2c36;">Primary</div>
<div class="a t" style="transform:scaleX(0.9382);left:250.7px;top:328px;font-size:11px;line-height:11px;color:#2c2c36;">Billing Address</div>
<div class="a" style="left:428px;top:308px;width:13px;height:14px;border:1px solid #8cc2c4;background:#fff"></div>
<div class="a t" style="transform:scaleX(0.9771);left:445px;top:311px;font-size:11px;line-height:11px;color:#2c2c36;">Account Verfied</div>
<div class="a t" style="transform:scaleX(0.9691);left:427.4px;top:328px;font-size:11px;line-height:11px;color:#2c2c36;">Unverified</div>
<div class="a" style="left:243px;top:348px;width:93px;height:19px;border:1px solid #ababab;background:#fff;"></div>
<div class="a" style="left:318px;top:349px;width:17px;height:17px;background:#f0f0f0;border-left:1px solid #ababab;box-sizing:border-box"></div>
<svg class="a" style="left:323.5px;top:356px" width="7" height="4"><path d="M0 0 H7 L3.5 4Z" fill="#666"/></svg>
<div class="a t" style="transform:scaleX(1.0061);left:247.6px;top:352px;font-size:11px;line-height:11px;color:#2c2c36;">01/01/1960</div>
<div class="a t" style="transform:scaleX(0.9796);left:359.5px;top:352px;font-size:11px;line-height:11px;color:#2c2c36;">63</div>
<div class="a" style="left:389px;top:348px;width:94px;height:19px;border:1px solid #ababab;background:#fff;"></div>
<div class="a" style="left:465px;top:349px;width:17px;height:17px;background:#f0f0f0;border-left:1px solid #ababab;box-sizing:border-box"></div>
<svg class="a" style="left:470.5px;top:356px" width="7" height="4"><path d="M0 0 H7 L3.5 4Z" fill="#666"/></svg>
<div class="a t" style="transform:scaleX(0.9157);left:390.6px;top:352px;font-size:11px;line-height:11px;color:#2c2c36;">Single</div>
<div class="a" style="left:506px;top:348px;width:79px;height:19px;border:1px solid #ababab;background:#fff;"></div>
<div class="a" style="left:567px;top:349px;width:17px;height:17px;background:#f0f0f0;border-left:1px solid #ababab;box-sizing:border-box"></div>
<svg class="a" style="left:572.5px;top:356px" width="7" height="4"><path d="M0 0 H7 L3.5 4Z" fill="#666"/></svg>
<div class="a t" style="transform:scaleX(0.9646);left:507.5px;top:352px;font-size:11px;line-height:11px;color:#2c2c36;">Male</div>
<div class="a t" style="transform:scaleX(1.0026);left:244.7px;top:369px;font-size:11px;line-height:11px;color:#2c2c36;font-style:italic;">Date of Birth</div>
<div class="a t" style="transform:scaleX(0.9705);left:356.7px;top:369px;font-size:11px;line-height:11px;color:#2c2c36;">Age</div>
<div class="a t" style="transform:scaleX(0.9517);left:389.5px;top:369px;font-size:11px;line-height:11px;color:#2c2c36;">Marital Status</div>
<div class="a t" style="transform:scaleX(0.8962);left:506.5px;top:369px;font-size:11px;line-height:11px;color:#2c2c36;">Sex</div>
<div class="a" style="left:305px;top:388px;width:280px;height:19px;border:1px solid #ababab;background:#fff;"></div>
<div class="a" style="left:567px;top:389px;width:17px;height:17px;background:#f0f0f0;border-left:1px solid #ababab;box-sizing:border-box"></div>
<svg class="a" style="left:572.5px;top:396px" width="7" height="4"><path d="M0 0 H7 L3.5 4Z" fill="#666"/></svg>
<div class="a t" style="transform:scaleX(0.9669);left:307.2px;top:392px;font-size:11px;line-height:11px;color:#2c2c36;">None selected</div>
<div class="a t" style="transform:scaleX(0.9981);left:251.6px;top:394px;font-size:11px;line-height:11px;color:#2c2c36;">Ethnicity</div>
<div class="a" style="left:305px;top:415px;width:280px;height:19px;border:1px solid #ababab;background:#fff;"></div>
<div class="a" style="left:567px;top:416px;width:17px;height:17px;background:#f0f0f0;border-left:1px solid #ababab;box-sizing:border-box"></div>
<svg class="a" style="left:572.5px;top:423px" width="7" height="4"><path d="M0 0 H7 L3.5 4Z" fill="#666"/></svg>
<div class="a t" style="transform:scaleX(0.9669);left:307.2px;top:419px;font-size:11px;line-height:11px;color:#2c2c36;">None selected</div>
<div class="a t" style="transform:scaleX(0.9343);left:270.3px;top:421px;font-size:11px;line-height:11px;color:#2c2c36;">Race</div>
<div class="a" style="left:305px;top:442px;width:280px;height:19px;border:1px solid #ababab;background:#fff;"></div>
<div class="a" style="left:567px;top:443px;width:17px;height:17px;background:#f0f0f0;border-left:1px solid #ababab;box-sizing:border-box"></div>
<svg class="a" style="left:572.5px;top:450px" width="7" height="4"><path d="M0 0 H7 L3.5 4Z" fill="#666"/></svg>
<div class="a t" style="transform:scaleX(0.9813);left:243.8px;top:439px;font-size:11px;line-height:11px;color:#2c2c36;">Preferred</div>
<div class="a t" style="transform:scaleX(0.9601);left:243.8px;top:452px;font-size:11px;line-height:11px;color:#2c2c36;">Language</div>
<div class="a" style="left:593px;top:202px;width:290px;height:258px;border:1px solid #c4c4c4"></div>
<div class="a" style="left:665px;top:212px;width:147px;height:19px;border:1px solid #ababab;background:#fff;"></div>
<div class="a t" style="transform:scaleX(0.9532);left:666.8px;top:217px;font-size:11px;line-height:11px;color:#2c2c36;">(</div>
<div class="a t" style="transform:scaleX(0.9532);left:679.3px;top:217px;font-size:11px;line-height:11px;color:#2c2c36;">)</div>
<div class="a t" style="transform:scaleX(0.8987);left:696.4px;top:216px;font-size:11px;line-height:11px;color:#2c2c36;">-</div>
<div class="a" style="left:823px;top:212px;width:46px;height:19px;border:1px solid #ababab;background:#fff;"></div>
<div class="a t" style="transform:scaleX(0.8997);left:602px;top:217px;font-size:11px;line-height:11px;color:#000;">Home</div>
<div class="a" style="left:665px;top:236px;width:147px;height:19px;border:1px solid #ababab;background:#fff;"></div>
<div class="a t" style="transform:scaleX(0.9532);left:666.8px;top:241px;font-size:11px;line-height:11px;color:#2c2c36;">(</div>
<div class="a t" style="transform:scaleX(0.9532);left:679.3px;top:241px;font-size:11px;line-height:11px;color:#2c2c36;">)</div>
<div class="a t" style="transform:scaleX(0.8987);left:696.4px;top:240px;font-size:11px;line-height:11px;color:#2c2c36;">-</div>
<div class="a" style="left:823px;top:236px;width:46px;height:19px;border:1px solid #ababab;background:#fff;"></div>
<div class="a t" style="transform:scaleX(0.9816);left:601.6px;top:240px;font-size:11px;line-height:11px;color:#2c2c36;">Work</div>
<div class="a" style="left:665px;top:259px;width:147px;height:19px;border:1px solid #ababab;background:#fff;"></div>
<div class="a t" style="transform:scaleX(0.9532);left:666.8px;top:264px;font-size:11px;line-height:11px;color:#2c2c36;">(</div>
<div class="a t" style="transform:scaleX(0.9532);left:679.3px;top:264px;font-size:11px;line-height:11px;color:#2c2c36;">)</div>
<div class="a t" style="transform:scaleX(0.8987);left:696.4px;top:263px;font-size:11px;line-height:11px;color:#2c2c36;">-</div>
<div class="a" style="left:823px;top:259px;width:46px;height:19px;border:1px solid #ababab;background:#fff;"></div>
<div class="a t" style="transform:scaleX(0.9346);left:601.6px;top:263px;font-size:11px;line-height:11px;color:#2c2c36;">Emergency</div>
<div class="a" style="left:665px;top:282px;width:147px;height:19px;border:1px solid #ababab;background:#fff;"></div>
<div class="a t" style="transform:scaleX(0.9532);left:666.8px;top:287px;font-size:11px;line-height:11px;color:#2c2c36;">(</div>
<div class="a t" style="transform:scaleX(0.9532);left:679.3px;top:287px;font-size:11px;line-height:11px;color:#2c2c36;">)</div>
<div class="a t" style="transform:scaleX(0.8987);left:696.4px;top:286px;font-size:11px;line-height:11px;color:#2c2c36;">-</div>
<div class="a" style="left:823px;top:282px;width:46px;height:19px;border:1px solid #ababab;background:#fff;"></div>
<div class="a t" style="transform:scaleX(0.9333);left:601.6px;top:286px;font-size:11px;line-height:11px;color:#2c2c36;">Pager</div>
<div class="a" style="left:665px;top:306px;width:147px;height:19px;border:1px solid #ababab;background:#fff;"></div>
<div class="a t" style="transform:scaleX(0.9532);left:666.8px;top:311px;font-size:11px;line-height:11px;color:#2c2c36;">(</div>
<div class="a t" style="transform:scaleX(0.9532);left:679.3px;top:311px;font-size:11px;line-height:11px;color:#2c2c36;">)</div>
<div class="a t" style="transform:scaleX(0.8987);left:696.4px;top:310px;font-size:11px;line-height:11px;color:#2c2c36;">-</div>
<div class="a" style="left:823px;top:306px;width:46px;height:19px;border:1px solid #ababab;background:#fff;"></div>
<div class="a t" style="transform:scaleX(1.0067);left:602px;top:311px;font-size:11px;line-height:11px;color:#000;">Other</div>
<div class="a" style="left:665px;top:329px;width:147px;height:19px;border:1px solid #ababab;background:#fff;"></div>
<div class="a t" style="transform:scaleX(0.9532);left:666.8px;top:334px;font-size:11px;line-height:11px;color:#2c2c36;">(</div>
<div class="a t" style="transform:scaleX(0.9532);left:679.3px;top:334px;font-size:11px;line-height:11px;color:#2c2c36;">)</div>
<div class="a t" style="transform:scaleX(0.8987);left:696.4px;top:333px;font-size:11px;line-height:11px;color:#2c2c36;">-</div>
<div class="a" style="left:823px;top:329px;width:46px;height:19px;border:1px solid #ababab;background:#fff;"></div>
<div class="a t" style="transform:scaleX(0.9134);left:602px;top:334px;font-size:11px;line-height:11px;color:#000;">Mobile</div>
<div class="a" style="left:665px;top:353px;width:147px;height:19px;border:1px solid #ababab;background:#fff;"></div>
<div class="a t" style="transform:scaleX(0.9532);left:666.8px;top:358px;font-size:11px;line-height:11px;color:#2c2c36;">(</div>
<div class="a t" style="transform:scaleX(0.9532);left:679.3px;top:358px;font-size:11px;line-height:11px;color:#2c2c36;">)</div>
<div class="a t" style="transform:scaleX(0.8987);left:696.4px;top:357px;font-size:11px;line-height:11px;color:#2c2c36;">-</div>
<div class="a" style="left:823px;top:353px;width:46px;height:19px;border:1px solid #ababab;background:#fff;"></div>
<div class="a t" style="transform:scaleX(0.9540);left:601.6px;top:357px;font-size:11px;line-height:11px;color:#2c2c36;">Fax</div>
<div class="a" style="left:665px;top:377px;width:204px;height:19px;border:1px solid #ababab;background:#fff;"></div>
<div class="a t" style="transform:scaleX(0.8982);left:601.5px;top:381px;font-size:11px;line-height:11px;color:#2c2c36;">E-Mail</div>
<div class="a" style="left:645px;top:410px;width:178px;height:19px;border:1px solid #ababab;background:#fff;"></div>
<div class="a" style="left:805px;top:411px;width:17px;height:17px;background:#f0f0f0;border-left:1px solid #ababab;box-sizing:border-box"></div>
<svg class="a" style="left:810.5px;top:418px" width="7" height="4"><path d="M0 0 H7 L3.5 4Z" fill="#666"/></svg>
<div class="a t" style="transform:scaleX(0.9954);left:653px;top:434px;font-size:11px;line-height:11px;color:#2c2c36;">Preferred Contact Method</div>
<div class="a" style="left:225px;top:433px;width:2px;height:2px;background:#454545"></div>
<div class="a" style="left:225px;top:437px;width:2px;height:2px;background:#454545"></div>
<div class="a" style="left:225px;top:441px;width:2px;height:2px;background:#454545"></div>
<div class="a" style="left:225px;top:445px;width:2px;height:2px;background:#454545"></div>
<div class="a" style="left:235px;top:466px;width:308px;height:317px;border:2px solid #c2c2c2"></div>
<div class="a" style="left:238px;top:468px;width:222px;height:24px;background:#eeeeee"></div>
<div class="a" style="left:238px;top:468px;width:53px;height:24px;background:#68acaf"></div>
<div class="a" style="left:237px;top:492px;width:304px;height:1px;background:#c8c8c8"></div>
<div class="a t" style="transform:scaleX(0.9512);left:241.9px;top:476px;font-size:11px;line-height:11px;color:#fff;"><u>P</u>roviders</div>
<div class="a t" style="transform:scaleX(0.9404);left:294.5px;top:476px;font-size:11px;line-height:11px;color:#2c2c36;"><u>L</u>ocations</div>
<div class="a t" style="transform:scaleX(0.9843);left:347.8px;top:476px;font-size:11px;line-height:11px;color:#2c2c36;"><u>O</u>ther</div>
<div class="a t" style="transform:scaleX(0.9699);left:383.3px;top:476px;font-size:11px;line-height:11px;color:#2c2c36;">D<u>a</u>tes</div>
<div class="a t" style="transform:scaleX(0.9520);left:419.1px;top:476px;font-size:11px;line-height:11px;color:#2c2c36;"><u>C</u>ustom</div>
<div class="a" style="left:242px;top:494px;width:56px;height:19px;border:1px solid #ababab;background:#fff;"></div>
<div class="a t" style="transform:scaleX(0.9523);left:243.2px;top:516px;font-size:11px;line-height:11px;color:#2c2c36;font-style:italic;">Primary Provider</div>
<div class="a" style="left:242px;top:534px;width:56px;height:19px;border:1px solid #ababab;background:#fff;"></div>
<div class="a t" style="transform:scaleX(0.9833);left:243.2px;top:556px;font-size:11px;line-height:11px;color:#2c2c36;font-style:italic;">Secondary Provider</div>
<div class="a" style="left:242px;top:574px;width:56px;height:19px;border:1px solid #ababab;background:#fff;"></div>
<div class="a t" style="transform:scaleX(0.9398);left:243.2px;top:596px;font-size:11px;line-height:11px;color:#2c2c36;font-style:italic;">Primary Referring</div>
<div class="a" style="left:242px;top:614px;width:56px;height:19px;border:1px solid #ababab;background:#fff;"></div>
<div class="a t" style="transform:scaleX(1.0005);left:243.2px;top:636px;font-size:11px;line-height:11px;color:#2c2c36;font-style:italic;">Secondary&nbsp; Referring</div>
<div class="a" style="left:242px;top:654px;width:56px;height:19px;border:1px solid #ababab;background:#fff;"></div>
<div class="a t" style="transform:scaleX(0.9723);left:243.2px;top:676px;font-size:11px;line-height:11px;color:#2c2c36;font-style:italic;">Primary Care</div>
<div class="a" style="left:548px;top:467px;width:336px;height:85px;border:1px solid #ababab;background:#fff;"></div>
<div class="a" style="left:866px;top:468px;width:17px;height:83px;background:#e8e8e8"></div>
<div class="a" style="left:866px;top:468px;width:17px;height:17px;background:#fff;border:1px solid #5ea7aa"></div>
<svg class="a" style="left:870px;top:473px" width="10" height="7" viewBox="0 0 10 7"><path d="M1.9,5.2 L5,1.6 L8.1,5.2" fill="none" stroke="#cdcdcd" stroke-width="2"/></svg>
<div class="a" style="left:866px;top:534px;width:17px;height:17px;background:#fff;border:1px solid #5ea7aa"></div>
<svg class="a" style="left:870px;top:540px" width="10" height="7" viewBox="0 0 10 7"><path d="M1.9,1 L5,4.6 L8.1,1" fill="none" stroke="#cdcdcd" stroke-width="2"/></svg>
<div class="a t" style="transform:scaleX(0.9473);left:550.5px;top:565px;font-size:11px;line-height:11px;color:#2c2c36;">Financial Location:</div>
<div class="a" style="left:663px;top:560px;width:219px;height:19px;border:1px solid #ababab;background:#f0f0f0;"></div>
<div class="a" style="left:864px;top:561px;width:17px;height:17px;background:#f0f0f0;border-left:1px solid #ababab;box-sizing:border-box"></div>
<svg class="a" style="left:869.5px;top:568px" width="7" height="4"><path d="M0 0 H7 L3.5 4Z" fill="#aaa"/></svg>
<div class="a t" style="transform:scaleX(0.9272);left:664.5px;top:564px;font-size:11px;line-height:11px;color:#9a9a9a;">MedEvolve LLC</div>
<div class="a t" style="transform:scaleX(0.9394);left:603px;top:582px;font-size:11px;line-height:11px;color:#2c2c36;">Acct Resp</div>
<div class="a t" style="transform:scaleX(0.9673);left:683.4px;top:582px;font-size:11px;line-height:11px;color:#2c2c36;">Ins Resp</div>
<div class="a t" style="transform:scaleX(1.0323);left:783.1px;top:582px;font-size:11px;line-height:11px;color:#2c2c36;">Total</div>
<div class="a" style="left:546px;top:598px;width:314px;height:178px;border:1px solid #b4b4b4"></div>
<div class="a" style="left:548px;top:601px;width:310px;height:173px;border:1px solid #b4b4b4;background:#fff;"></div>
<div class="a t" style="left:554.9px;top:607px;font-size:11px;line-height:11px;color:#2c2c36;">Total</div>
<div class="a t" style="transform:scaleX(0.9954);left:628.0px;top:607px;font-size:11px;line-height:11px;color:#2c2c36;">$37.64</div>
<div class="a t" style="transform:scaleX(1.0061);left:706.5px;top:607px;font-size:11px;line-height:11px;color:#2c2c36;">$0.00</div>
<div class="a t" style="transform:scaleX(0.9954);left:778.5px;top:607px;font-size:11px;line-height:11px;color:#2c2c36;">$37.64</div>
<div class="a t" style="left:554.9px;top:625px;font-size:11px;line-height:11px;color:#2c2c36;">0-30</div>
<div class="a t" style="transform:scaleX(0.9954);left:628.0px;top:625px;font-size:11px;line-height:11px;color:#2c2c36;">$37.64</div>
<div class="a t" style="transform:scaleX(1.0061);left:706.5px;top:625px;font-size:11px;line-height:11px;color:#2c2c36;">$0.00</div>
<div class="a t" style="transform:scaleX(0.9954);left:778.5px;top:625px;font-size:11px;line-height:11px;color:#2c2c36;">$37.64</div>
<div class="a t" style="left:554.9px;top:642px;font-size:11px;line-height:11px;color:#2c2c36;">31-60</div>
<div class="a t" style="transform:scaleX(1.0061);left:633.8px;top:642px;font-size:11px;line-height:11px;color:#2c2c36;">$0.00</div>
<div class="a t" style="transform:scaleX(1.0061);left:706.5px;top:642px;font-size:11px;line-height:11px;color:#2c2c36;">$0.00</div>
<div class="a t" style="transform:scaleX(1.0061);left:784.3px;top:642px;font-size:11px;line-height:11px;color:#2c2c36;">$0.00</div>
<div class="a t" style="left:554.9px;top:660px;font-size:11px;line-height:11px;color:#2c2c36;">61-90</div>
<div class="a t" style="transform:scaleX(1.0061);left:633.8px;top:660px;font-size:11px;line-height:11px;color:#2c2c36;">$0.00</div>
<div class="a t" style="transform:scaleX(1.0061);left:706.5px;top:660px;font-size:11px;line-height:11px;color:#2c2c36;">$0.00</div>
<div class="a t" style="transform:scaleX(1.0061);left:784.3px;top:660px;font-size:11px;line-height:11px;color:#2c2c36;">$0.00</div>
<div class="a t" style="left:554.9px;top:677px;font-size:11px;line-height:11px;color:#2c2c36;">91-120</div>
<div class="a t" style="transform:scaleX(1.0061);left:633.8px;top:677px;font-size:11px;line-height:11px;color:#2c2c36;">$0.00</div>
<div class="a t" style="transform:scaleX(1.0061);left:706.5px;top:677px;font-size:11px;line-height:11px;color:#2c2c36;">$0.00</div>
<div class="a t" style="transform:scaleX(1.0061);left:784.3px;top:677px;font-size:11px;line-height:11px;color:#2c2c36;">$0.00</div>
<div class="a t" style="left:554.9px;top:694px;font-size:11px;line-height:11px;color:#2c2c36;">121-150</div>
<div class="a t" style="transform:scaleX(1.0061);left:633.8px;top:694px;font-size:11px;line-height:11px;color:#2c2c36;">$0.00</div>
<div class="a t" style="transform:scaleX(1.0061);left:706.5px;top:694px;font-size:11px;line-height:11px;color:#2c2c36;">$0.00</div>
<div class="a t" style="transform:scaleX(1.0061);left:784.3px;top:694px;font-size:11px;line-height:11px;color:#2c2c36;">$0.00</div>
<div class="a t" style="left:554.9px;top:712px;font-size:11px;line-height:11px;color:#2c2c36;">151 +</div>
<div class="a t" style="transform:scaleX(1.0061);left:633.8px;top:712px;font-size:11px;line-height:11px;color:#2c2c36;">$0.00</div>
<div class="a t" style="transform:scaleX(1.0061);left:706.5px;top:712px;font-size:11px;line-height:11px;color:#2c2c36;">$0.00</div>
<div class="a t" style="transform:scaleX(1.0061);left:784.3px;top:712px;font-size:11px;line-height:11px;color:#2c2c36;">$0.00</div>
<div class="a" style="left:860px;top:706px;width:24px;height:36px;background:#eeeeee"></div>
<div class="a" style="left:860px;top:742px;width:24px;height:30px;background:#68acaf"></div>
<div class="a t" style="left:866px;top:739px;font-size:11px;line-height:11px;color:#2c2c36;transform:rotate(-90deg);transform-origin:0 0">Group</div>
<div class="a t" style="left:866px;top:769px;font-size:11px;line-height:11px;color:#fff;transform:rotate(-90deg);transform-origin:0 0">Acct</div>
</body></html>
